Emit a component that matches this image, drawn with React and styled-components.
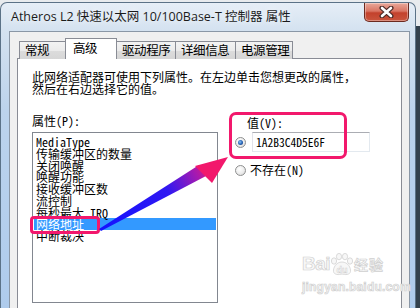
import React from "react";
import styled, { createGlobalStyle, css } from "styled-components";

const GlobalStyle = createGlobalStyle`
  html, body { margin: 0; padding: 0; }
  body {
    width: 420px;
    height: 308px;
    overflow: hidden;
    background: linear-gradient(180deg, #e8ebee 0, #e8ebee 26px, #33414d 26px);
    font-family: "Noto Sans CJK SC", sans-serif;
  }
`;

const PINK = "#f2186c";
const UI_FONT = `"Open Sans", "Noto Sans CJK SC", sans-serif`;
const DLG_FONT = `"Noto Sans Mono CJK SC", "Noto Sans CJK SC", sans-serif`;

const tabs = ["常规", "高级", "驱动程序", "详细信息", "电源管理"];
const tabWidths = [47, 52, 60, 61, 58];

const items = [
  "MediaType",
  "传输缓冲区的数量",
  "关闭唤醒",
  "唤醒功能",
  "接收缓冲区数",
  "流控制",
  "每秒最大 IRQ",
  "网络地址",
  "中断裁决",
];

export default function App() {
  return (
    <Desktop>
      <GlobalStyle />
      <Window>
        <TitleBar>
          <Title>Atheros L2 快速以太网 10/100Base-T 控制器 属性</Title>
          <CloseButton>
            <svg width="15" height="12" viewBox="0 0 15 12">
              <path d="M3 2 L12 10 M12 2 L3 10" stroke="#4a2a26" strokeWidth="5" strokeLinecap="round" />
              <path d="M3 2 L12 10 M12 2 L3 10" stroke="#ffffff" strokeWidth="2.6" strokeLinecap="round" />
            </svg>
          </CloseButton>
        </TitleBar>
        <Frame>
          <Dialog>
            <Tabs>
              {tabs.map((t, i) => (
                <Tab key={t} $active={i === 1} $w={tabWidths[i]}>
                  {t}
                </Tab>
              ))}
            </Tabs>
            <Panel>
              <Description>
                此网络适配器可使用下列属性。在左边单击您想更改的属性，
                <br />
                然后在右边选择它的值。
              </Description>
              <Fields>
                <div>
                  <Label>属性(P):</Label>
                  <List>
                    {items.map((it, i) => (
                      <Item key={it} $selected={i === 7}>
                        {it}
                      </Item>
                    ))}
                  </List>
                </div>
                <ValueColumn>
                  <Label $indent>值(V):</Label>
                  <RadioRow>
                    <Radio $checked />
                    <TextBox>1A2B3C4D5E6F</TextBox>
                  </RadioRow>
                  <RadioRow $second>
                    <Radio />
                    <RadioText>不存在(N)</RadioText>
                  </RadioRow>
                </ValueColumn>
              </Fields>
            </Panel>
          </Dialog>
        </Frame>
      </Window>

      <Mark $x={229} $y={112} $w={118} $h={47} $r={7} />
      <Mark $x={30} $y={216} $w={70} $h={18} $r={4} />

      <Overlay width="420" height="308" viewBox="0 0 420 308">
        <defs>
          <linearGradient id="shaft" gradientUnits="userSpaceOnUse" x1="100" y1="230" x2="214" y2="166">
            <stop offset="0" stopColor="#1212ff" />
            <stop offset="0.6" stopColor="#3018f2" />
            <stop offset="0.85" stopColor="#a61ab0" />
            <stop offset="1" stopColor={PINK} />
          </linearGradient>
        </defs>
        <polygon points="99,229 199,165 206,176 101,231" fill="url(#shaft)" />
        <polygon points="195,166 228,157 212,183" fill={PINK} />
      </Overlay>

      <Watermark>
        <WmRow>
          <WmBai>Bai</WmBai>
          <svg width="24" height="23" viewBox="0 0 24 23">
            <g fill="#f7f7f7" stroke="#d2d2d2" strokeWidth="0.8">
              <ellipse cx="4" cy="8" rx="2.6" ry="3.2" />
              <ellipse cx="9" cy="3.6" rx="2.6" ry="3.2" />
              <ellipse cx="15" cy="3.6" rx="2.6" ry="3.2" />
              <ellipse cx="20" cy="8" rx="2.6" ry="3.2" />
              <path d="M12 9 C6 9 3 15 3.5 18.5 C4 22 9 22 12 21 C15 22 20 22 20.5 18.5 C21 15 18 9 12 9 Z" />
            </g>
            <text x="12" y="19.5" textAnchor="middle" fontFamily="Liberation Sans, sans-serif" fontWeight="700" fontSize="9" fill="#ffffff" stroke="#cfcfcf" strokeWidth="0.5">du</text>
          </svg>
          <WmCn>经验</WmCn>
        </WmRow>
        <WmUrl>jingyan.baidu.com</WmUrl>
      </Watermark>
    </Desktop>
  );
}

const Desktop = styled.div`
  position: relative;
  width: 420px;
  height: 308px;
  overflow: hidden;
`;

const Window = styled.div`
  margin-top: 2px;
  width: 416px;
  height: 306px;
  box-sizing: border-box;
  border: 1px solid #5b7287;
  border-bottom: none;
  border-radius: 7px 7px 0 0;
  background: linear-gradient(180deg, #e6eef7 0%, #d4e2f0 9%, #bcd3ec 35%, #aecbec 100%);
  display: flex;
  flex-direction: column;
`;

const TitleBar = styled.div`
  height: 28px;
  display: flex;
  align-items: flex-start;
  flex: none;
`;

const Title = styled.div`
  padding-left: 10px;
  line-height: 28px;
  font-family: ${UI_FONT};
  font-size: 12.5px;
  color: #1b1b1b;
  white-space: nowrap;
  text-shadow: 0 0 6px rgba(255, 255, 255, 0.9);
`;

const CloseButton = styled.div`
  margin-left: auto;
  margin-right: 6px;
  width: 45px;
  height: 19px;
  box-sizing: border-box;
  border: 1px solid #6b2a20;
  border-top: none;
  border-radius: 0 0 5px 5px;
  background: linear-gradient(180deg, #e9a99b 0%, #d97563 45%, #c3412c 55%, #c9553d 100%);
  box-shadow: inset 0 0 0 1px rgba(255, 255, 255, 0.35);
  display: flex;
  align-items: center;
  justify-content: center;
`;

const Frame = styled.div`
  flex: 1;
  display: flex;
  padding: 0 5px 0 8px;
`;

const Dialog = styled.div`
  flex: 1;
  display: flex;
  flex-direction: column;
  background: #f0f0f0;
  border: 1px solid #8a97a6;
  border-bottom: none;
  padding: 7px 7px 0 7px;
`;

const Tabs = styled.div`
  display: flex;
  align-items: flex-end;
  padding-left: 2px;
  height: 20px;
  margin-bottom: -1px;
  position: relative;
  z-index: 1;
`;

const Tab = styled.div`
  width: ${(p) => p.$w}px;
  box-sizing: border-box;
  height: 18px;
  padding-left: 5px;
  border: 1px solid #898c95;
  border-bottom: none;
  margin-right: -1px;
  background: linear-gradient(180deg, #f3f3f3 0%, #ebebeb 50%, #dcdcdc 52%, #d6d6d6 100%);
  font-family: ${UI_FONT};
  font-size: 12.5px;
  letter-spacing: -0.4px;
  line-height: 17px;
  color: #000;
  white-space: nowrap;
  ${(p) =>
    p.$active &&
    css`
      height: 21px;
      padding-left: 7px;
      background: #fff;
      line-height: 20px;
      position: relative;
      z-index: 2;
    `}
`;

const Panel = styled.div`
  flex: 1;
  background: #fff;
  border: 1px solid #898c95;
  border-bottom: none;
  padding: 12px 14px 0 14px;
  font-family: ${DLG_FONT};
  font-size: 12px;
  color: #000;
`;

const Description = styled.div`
  line-height: 12px;
  letter-spacing: 0;
  white-space: nowrap;
`;

const Fields = styled.div`
  display: grid;
  grid-template-columns: 186px 1fr;
  column-gap: 14px;
  margin-top: 20px;
`;

const Label = styled.div`
  line-height: 12px;
  margin-bottom: 5px;
  ${(p) =>
    p.$indent &&
    css`
      padding-left: 15px;
      margin-bottom: 3px;
    `}
`;

const List = styled.div`
  width: 186px;
  height: 171px;
  box-sizing: border-box;
  border: 1px solid #828790;
  background: #fff;
  padding: 3px 1px 0;
`;

const Item = styled.div`
  height: 11.75px;
  line-height: 11.75px;
  padding-left: 2px;
  white-space: nowrap;
  ${(p) =>
    p.$selected &&
    css`
      background: #3399ff;
      color: #fff;
    `}
`;

const ValueColumn = styled.div`
  padding-top: 2px;
`;

const RadioRow = styled.div`
  display: flex;
  align-items: center;
  gap: 6px;
  padding-left: 3px;
  height: 20px;
  ${(p) =>
    p.$second &&
    css`
      margin-top: 8px;
      gap: 4px;
    `}
`;

const Radio = styled.span`
  flex: none;
  width: 11px;
  height: 11px;
  box-sizing: border-box;
  border-radius: 50%;
  border: 1px solid #8e8f8f;
  background: radial-gradient(circle at 40% 35%, #ffffff 0, #ececec 55%, #cdcdcd 100%);
  position: relative;
  ${(p) =>
    p.$checked &&
    css`
      &::after {
        content: "";
        position: absolute;
        inset: 2px;
        border-radius: 50%;
        background: radial-gradient(circle at 40% 40%, #8cc6f5 0, #2a66b8 50%, #0f2f6e 100%);
      }
    `}
`;

const TextBox = styled.div`
  width: 118px;
  height: 20px;
  box-sizing: border-box;
  border: 1px solid;
  border-color: #abadb3 #e3e9ef #e3e9ef #e2e3ea;
  background: #fff;
  padding-left: 3px;
  line-height: 18px;
  font-size: 11.5px;
`;

const RadioText = styled.span`
  line-height: 12px;
`;

const Mark = styled.div`
  position: absolute;
  left: ${(p) => p.$x}px;
  top: ${(p) => p.$y}px;
  width: ${(p) => p.$w}px;
  height: ${(p) => p.$h}px;
  box-sizing: border-box;
  border: 3px solid ${PINK};
  border-radius: ${(p) => p.$r}px;
  pointer-events: none;
`;

const Overlay = styled.svg`
  position: absolute;
  left: 0;
  top: 0;
  pointer-events: none;
`;

const Watermark = styled.div`
  position: absolute;
  left: 302px;
  top: 252px;
  display: flex;
  flex-direction: column;
  align-items: flex-start;
  pointer-events: none;
`;

const WmRow = styled.div`
  display: flex;
  align-items: center;
  height: 24px;
`;

const WmText = css`
  color: #f8f8f8;
  -webkit-text-stroke: 0.7px #d0d0d0;
`;

const WmBai = styled.span`
  ${WmText};
  font-family: "Liberation Sans", sans-serif;
  font-weight: 700;
  font-size: 19px;
  letter-spacing: -0.5px;
`;

const WmCn = styled.span`
  ${WmText};
  font-family: "Noto Sans CJK SC", sans-serif;
  font-weight: 700;
  font-size: 14px;
  letter-spacing: 1px;
`;

const WmUrl = styled.span`
  ${WmText};
  margin-top: 4px;
  font-family: "Liberation Sans", sans-serif;
  font-weight: 700;
  font-size: 12px;
  letter-spacing: 0.2px;
`;
